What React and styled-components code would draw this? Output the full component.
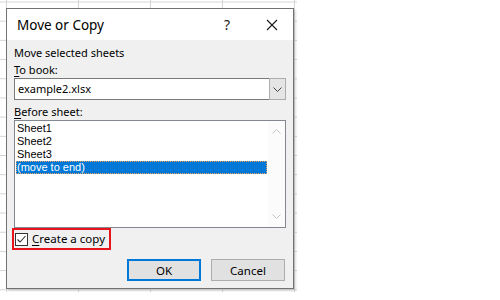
import React from "react";
import styled, { createGlobalStyle } from "styled-components";

const GlobalStyle = createGlobalStyle`
  body {
    margin: 0;
    background: #ffffff;
    font-family: "Noto Sans", "Liberation Sans", sans-serif;
  }
`;

const sheets = ["Sheet1", "Sheet2", "Sheet3", "(move to end)"];

export default function App() {
  return (
    <>
      <GlobalStyle />
      <Backdrop>
        <Dialog>
          <TitleBar>
            <Title>Move or Copy</Title>
            <HelpMark>?</HelpMark>
            <CloseBtn>
              <svg width="12" height="12" viewBox="0 0 12 12">
                <path d="M1 1L11 11M11 1L1 11" stroke="#1a1a1a" strokeWidth="1.1" />
              </svg>
            </CloseBtn>
          </TitleBar>
          <Body>
            <Label>Move selected sheets</Label>
            <Label><u>T</u>o book:</Label>
            <Combo>
              <ComboText>example2.xlsx</ComboText>
              <ComboButton>
                <svg width="9" height="5" viewBox="0 0 9 5">
                  <path d="M0.5 0.5L4.5 4.5L8.5 0.5" stroke="#444" fill="none" strokeWidth="1" />
                </svg>
              </ComboButton>
            </Combo>
            <Label><u>B</u>efore sheet:</Label>
            <ListBox>
              <Items>
                {sheets.map((s, i) => (
                  <Item key={s} selected={i === sheets.length - 1}>{s}</Item>
                ))}
              </Items>
              <ScrollBar>
                <svg width="9" height="5" viewBox="0 0 9 5">
                  <path d="M0.5 4.5L4.5 0.5L8.5 4.5" stroke="#c4c4c4" fill="none" strokeWidth="1" />
                </svg>
                <svg width="9" height="5" viewBox="0 0 9 5">
                  <path d="M0.5 0.5L4.5 4.5L8.5 0.5" stroke="#c4c4c4" fill="none" strokeWidth="1" />
                </svg>
              </ScrollBar>
            </ListBox>
            <CheckRow>
              <CheckBox>
                <svg width="11" height="11" viewBox="0 0 11 11">
                  <path d="M1.5 5.5L4 8L9.5 2" stroke="#333" fill="none" strokeWidth="1.1" />
                </svg>
              </CheckBox>
              <CheckLabel><u>C</u>reate a copy</CheckLabel>
            </CheckRow>
            <Buttons>
              <Button primary>OK</Button>
              <Button>Cancel</Button>
            </Buttons>
          </Body>
        </Dialog>
      </Backdrop>
    </>
  );
}

const Backdrop = styled.div`
  width: 297px;
  height: 292px;
  box-sizing: border-box;
  padding: 8px 0 0 6px;
  background-color: #ffffff;
  background-image:
    linear-gradient(to right, #d4d4d4 1px, transparent 1px),
    linear-gradient(to bottom, #d4d4d4 1px, transparent 1px);
  background-size: 72px 100%, 100% 19.2px;
  background-position: 6px 0, 0 1.5px;
`;

const Dialog = styled.div`
  width: 288px;
  height: 281px;
  box-sizing: border-box;
  border: 1px solid #727272;
  background: #f0f0f0;
  display: flex;
  flex-direction: column;
  box-shadow: 2px 2px 2px rgba(0, 0, 0, 0.12);
`;

const TitleBar = styled.div`
  height: 31px;
  background: #ffffff;
  display: flex;
  align-items: center;
  padding-left: 10px;
`;

const Title = styled.div`
  font-size: 13.5px;
  color: #000;
  flex: 1;
`;

const HelpMark = styled.div`
  font-size: 14px;
  color: #1a1a1a;
  width: 14px;
  margin-right: 28px;
`;

const CloseBtn = styled.div`
  width: 12px;
  height: 12px;
  margin-right: 15px;
  display: flex;
`;

const Body = styled.div`
  flex: 1;
  padding: 4px 7px 0 7px;
  display: flex;
  flex-direction: column;
  font-size: 11px;
  color: #000;
`;

const Label = styled.div`
  height: 17px;
  line-height: 17px;
  white-space: nowrap;
  u { text-decoration-thickness: 1px; text-underline-offset: 2px; }
`;

const Combo = styled.div`
  height: 22px;
  box-sizing: border-box;
  border: 1px solid #7a7a7a;
  background: #ffffff;
  display: flex;
  margin-bottom: 3px;
`;

const ComboText = styled.div`
  flex: 1;
  line-height: 20px;
  padding-left: 3px;
`;

const ComboButton = styled.div`
  width: 17px;
  box-sizing: border-box;
  background: #e5e5e5;
  border: 1px solid #adadad;
  margin: -1px -1px -1px 0;
  height: 22px;
  display: flex;
  align-items: center;
  justify-content: center;
`;

const ListBox = styled.div`
  height: 108px;
  box-sizing: border-box;
  border: 1px solid #828790;
  background: #ffffff;
  display: flex;
`;

const Items = styled.div`
  flex: 1;
  padding: 1px 1px 0 1px;
`;

const Item = styled.div`
  height: 13px;
  line-height: 13px;
  padding-left: 1px;
  font-family: "Liberation Sans", "Noto Sans", sans-serif;
  font-size: 11px;
  white-space: nowrap;
  background: ${p => (p.selected ? "#0078d7" : "transparent")};
  color: ${p => (p.selected ? "#ffffff" : "#000")};
  outline: ${p => (p.selected ? "1px dotted #f0a060" : "none")};
  outline-offset: -1px;
`;

const ScrollBar = styled.div`
  width: 17px;
  background: #fbfbfb;
  display: flex;
  flex-direction: column;
  justify-content: space-between;
  align-items: center;
  padding: 8px 0;
`;

const CheckRow = styled.div`
  align-self: flex-start;
  margin: 0 0 0 -2px;
  height: 22px;
  box-sizing: border-box;
  border: 2px solid #e8141b;
  display: flex;
  align-items: center;
  padding: 0 4px 0 1px;
  gap: 4px;
`;

const CheckBox = styled.div`
  width: 13px;
  height: 13px;
  box-sizing: border-box;
  border: 1px solid #333;
  background: #ffffff;
  display: flex;
  align-items: center;
  justify-content: center;
`;

const CheckLabel = styled.div`
  line-height: 16px;
  font-size: 11.5px;
  white-space: nowrap;
  u { text-decoration-thickness: 1px; text-underline-offset: 2px; }
`;

const Buttons = styled.div`
  display: flex;
  justify-content: flex-end;
  gap: 10px;
  margin-top: 9px;
  padding-right: 1px;
`;

const Button = styled.button`
  width: 74px;
  height: 22px;
  box-sizing: border-box;
  background: #e1e1e1;
  border: ${p => (p.primary ? "2px solid #0078d7" : "1px solid #adadad")};
  font-family: "Noto Sans", "Liberation Sans", sans-serif;
  font-size: 11.5px;
  color: #000;
  padding: 0;
`;
